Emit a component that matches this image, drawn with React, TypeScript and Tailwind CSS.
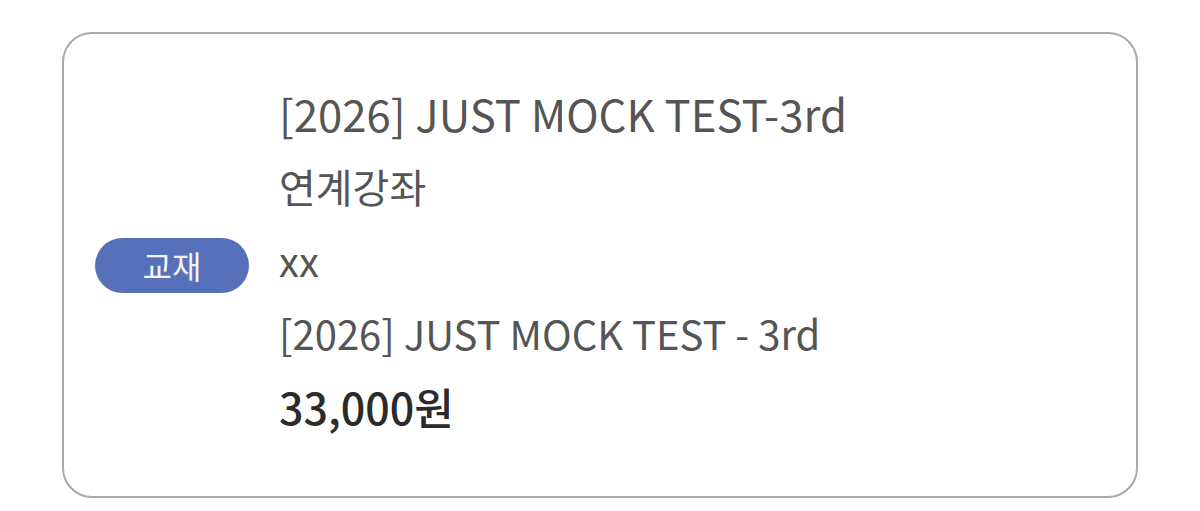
import React from "react";

interface Lecture {
  title: string;
  category: string;
  tag: string;
  code: string;
  subtitle: string;
  price: string;
}

const LECTURE: Lecture = {
  title: "[2026] JUST MOCK TEST-3rd",
  category: "연계강좌",
  tag: "교재",
  code: "xx",
  subtitle: "[2026] JUST MOCK TEST - 3rd",
  price: "33,000원",
};

export default function App() {
  const item = LECTURE;

  return (
    <div
      className="w-[1200px] h-[511px] bg-white pt-[32px] pl-[62px]"
      style={{ fontFamily: '"Noto Sans CJK KR", "Noto Sans", sans-serif' }}
    >
      <div className="w-[1076px] h-[466px] rounded-[30px] border-[2.5px] border-[#a9a9a9] flex items-center pl-[31px]">
        {/* Tag */}
        <div className="w-[154px] h-[55px] rounded-full bg-[#5670b9] flex items-center justify-center text-[#f2f4fb] text-[32px] leading-none">
          {item.tag}
        </div>

        {/* Details */}
        <div className="ml-[30px] flex flex-col text-[#555555] text-[40px] leading-[73px] -mt-[10px]">
          <span className="text-[43.7px] leading-[71px]">{item.title}</span>
          <span className="leading-[75px]">{item.category}</span>
          <span>{item.code}</span>
          <span>{item.subtitle}</span>
          <span className="font-medium text-[43px] text-[#2b2b2b]">{item.price}</span>
        </div>
      </div>
    </div>
  );
}
